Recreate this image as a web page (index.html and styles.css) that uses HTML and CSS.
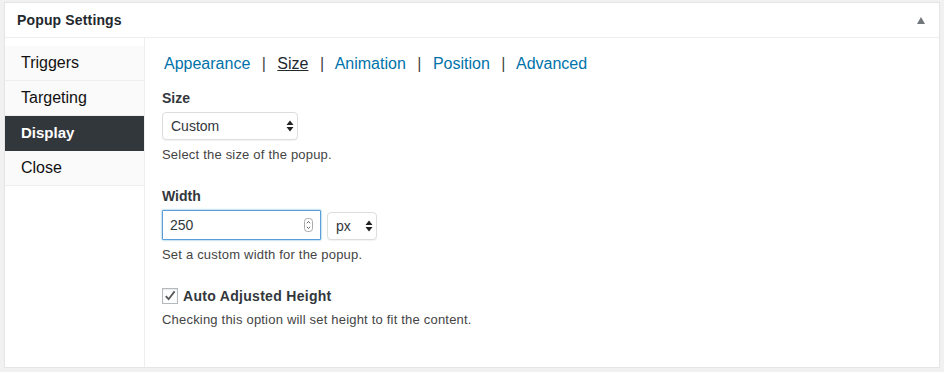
FILE: index.html
```html
<!DOCTYPE html>
<html lang="en">

<head>
    <meta charset="utf-8" />
    <title>Popup Settings</title>
    <link rel="stylesheet" href="styles.css">
</head>

<body>
    <div class="postbox">
        <div class="postbox-head">
            <h2>Popup Settings</h2>
            <span class="toggle-arrow"></span>
        </div>
        <div class="postbox-inside">
            <ul class="tabs">
                <li><a href="javascript:void(0)">Triggers</a></li>
                <li><a href="javascript:void(0)">Targeting</a></li>
                <li class="active"><a href="javascript:void(0)">Display</a></li>
                <li><a href="javascript:void(0)">Close</a></li>
            </ul>
            <div class="tab-content">
                <div class="subtabs">
                    <a href="javascript:void(0)">Appearance</a>
                    <span class="sep">|</span>
                    <a href="javascript:void(0)" class="current">Size</a>
                    <span class="sep">|</span>
                    <a href="javascript:void(0)">Animation</a>
                    <span class="sep">|</span>
                    <a href="javascript:void(0)">Position</a>
                    <span class="sep">|</span>
                    <a href="javascript:void(0)">Advanced</a>
                </div>

                <div class="field">
                    <label class="field-label" for="size">Size</label>
                    <span class="select-wrap size-select">
                        <select id="size">
                            <option>Custom</option>
                        </select>
                        <svg class="select-arrows" width="8" height="12" viewBox="0 0 8 12"><path d="M4 0.5L7.5 5H0.5Z M4 11.5L7.5 7H0.5Z" fill="#222"/></svg>
                    </span>
                    <p class="desc">Select the size of the popup.</p>
                </div>

                <div class="field">
                    <label class="field-label" for="width">Width</label>
                    <div class="width-row">
                        <span class="number-wrap">
                            <input type="text" id="width" value="250">
                            <svg class="spinner" width="9" height="14" viewBox="0 0 9 14"><rect x="0.5" y="0.5" width="8" height="13" rx="3" fill="#fff" stroke="#aaa"/><path d="M2.8 5.2L4.5 3.6L6.2 5.2M2.8 8.8L4.5 10.4L6.2 8.8" fill="none" stroke="#555" stroke-width="0.9"/></svg>
                        </span>
                        <span class="select-wrap unit-select">
                            <select>
                                <option>px</option>
                            </select>
                            <svg class="select-arrows" width="8" height="12" viewBox="0 0 8 12"><path d="M4 0.5L7.5 5H0.5Z M4 11.5L7.5 7H0.5Z" fill="#222"/></svg>
                        </span>
                    </div>
                    <p class="desc">Set a custom width for the popup.</p>
                </div>

                <div class="field">
                    <label class="check-label">
                        <span class="checkbox"><svg width="14" height="14" viewBox="0 0 14 14"><path d="M2.8 7.2L5.6 10.2L11.6 2.4" fill="none" stroke="#555" stroke-width="1.8"/></svg></span>
                        Auto Adjusted Height
                    </label>
                    <p class="desc">Checking this option will set height to fit the content.</p>
                </div>
            </div>
        </div>
    </div>
</body>

</html>
```

FILE: styles.css
```css
html,
body {
    margin: 0;
    padding: 0;
}
body {
    background-color: #f1f1f1;
    font-family: "Liberation Sans", Arial, sans-serif;
    color: #23282d;
    padding: 2px 4px 0;
}
a {
    text-decoration: none;
}
.postbox {
    height: 364px;
    background-color: #fff;
    border: 1px solid #e5e5e5;
    box-shadow: 0 1px 1px rgba(0, 0, 0, 0.04);
    display: flex;
    flex-direction: column;
}
.postbox-head {
    height: 34px;
    border-bottom: 1px solid #eee;
    display: flex;
    align-items: center;
    justify-content: space-between;
    padding: 0 12px;
}
.postbox-head h2 {
    margin: 0;
    font-size: 14px;
    font-weight: bold;
    color: #23282d;
    letter-spacing: 0.15px;
}
.toggle-arrow {
    width: 0;
    height: 0;
    border-left: 4px solid transparent;
    border-right: 4px solid transparent;
    border-bottom: 7px solid #72777c;
    margin-right: 2px;
    margin-top: 1px;
}
.postbox-inside {
    flex: 1;
    display: flex;
}
/* left tabs */
.tabs {
    width: 139px;
    margin: 0;
    padding: 8px 0 0;
    list-style: none;
    border-right: 1px solid #eee;
}
.tabs li {
    background-color: #fafafa;
    border-bottom: 1px solid #eee;
}
.tabs li a {
    display: block;
    height: 34px;
    line-height: 34px;
    padding-left: 16px;
    font-size: 16px;
    color: #111;
}
.tabs li.active {
    background-color: #32373c;
    border-bottom-color: #32373c;
}
.tabs li.active a {
    color: #fff;
    font-weight: bold;
    font-size: 15px;
}
/* right content */
.tab-content {
    flex: 1;
    padding: 16px 17px 0;
}
.subtabs {
    height: 20px;
    line-height: 20px;
    font-size: 16px;
    padding-left: 2px;
}
.subtabs a {
    color: #0073aa;
}
.subtabs a.current {
    color: #23282d;
    text-decoration: underline;
}
.subtabs .sep {
    color: #444;
    margin: 0 7px;
}
.field {
    margin-top: 15px;
}
.field + .field {
    margin-top: 23px;
}
.field-label {
    display: block;
    height: 18px;
    line-height: 18px;
    font-size: 14px;
    font-weight: bold;
    color: #32373c;
    margin-bottom: 5px;
}
.desc {
    margin: 6px 0 0;
    font-size: 13px;
    line-height: 18px;
    color: #444;
    letter-spacing: 0.2px;
}
.select-wrap {
    position: relative;
    display: inline-block;
    vertical-align: top;
}
.select-wrap select {
    -webkit-appearance: none;
    appearance: none;
    display: block;
    height: 28px;
    border: 1px solid #ddd;
    border-radius: 4px;
    background-color: #fff;
    box-shadow: 0 1px 1px rgba(0, 0, 0, 0.05);
    font-family: inherit;
    font-size: 14px;
    color: #32373c;
    padding: 0 8px;
    margin: 0;
    outline: none;
}
.size-select select {
    width: 136px;
}
.unit-select select {
    width: 50px;
}
.select-arrows {
    position: absolute;
    right: 4px;
    top: 8px;
    pointer-events: none;
}
.width-row {
    display: flex;
    align-items: flex-start;
    gap: 6px;
}
.width-row .unit-select {
    margin-top: 2px;
}
.number-wrap {
    position: relative;
    display: inline-block;
}
.number-wrap input {
    display: block;
    box-sizing: border-box;
    width: 159px;
    height: 30px;
    border: 1px solid #5b9dd9;
    border-radius: 1px;
    box-shadow: 0 0 2px rgba(30, 140, 190, 0.8);
    font-family: inherit;
    font-size: 14px;
    color: #32373c;
    padding: 0 7px;
    margin: 0;
    outline: none;
}
.spinner {
    position: absolute;
    right: 8px;
    top: 8px;
}
.check-label {
    display: flex;
    align-items: center;
    height: 18px;
    margin-top: 1px;
    font-size: 14px;
    font-weight: bold;
    color: #32373c;
    letter-spacing: 0.3px;
}
.checkbox {
    width: 14px;
    height: 14px;
    border: 1px solid #b4b9be;
    box-shadow: inset 0 1px 2px rgba(0, 0, 0, 0.1);
    background-color: #fff;
    margin-right: 5px;
    display: flex;
}
```
